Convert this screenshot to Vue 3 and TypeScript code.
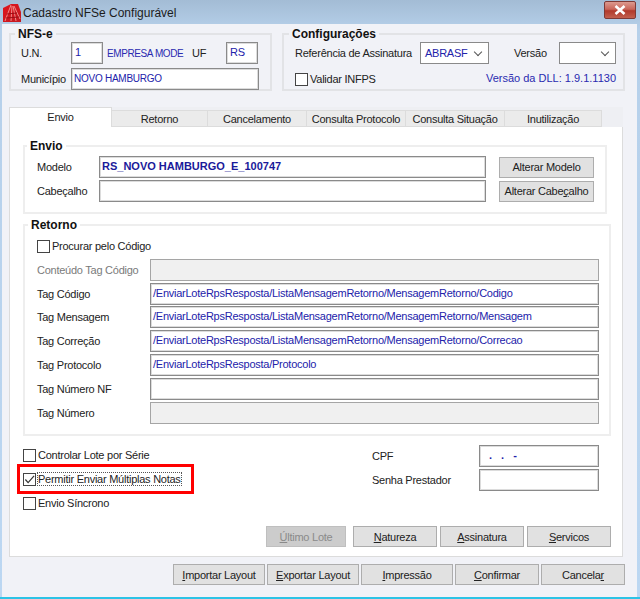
<script setup lang="ts">
const tabs = [
  { label: 'Envio', width: 103 },
  { label: 'Retorno', width: 96 },
  { label: 'Cancelamento', width: 99 },
  { label: 'Consulta Protocolo', width: 99 },
  { label: 'Consulta Situação', width: 99 },
  { label: 'Inutilização', width: 97 },
]

const tagRows = [
  { label: 'Conteúdo Tag Código', value: '', off: true },
  { label: 'Tag Código', value: '/EnviarLoteRpsResposta/ListaMensagemRetorno/MensagemRetorno/Codigo', off: false },
  { label: 'Tag Mensagem', value: '/EnviarLoteRpsResposta/ListaMensagemRetorno/MensagemRetorno/Mensagem', off: false },
  { label: 'Tag Correção', value: '/EnviarLoteRpsResposta/ListaMensagemRetorno/MensagemRetorno/Correcao', off: false },
  { label: 'Tag Protocolo', value: '/EnviarLoteRpsResposta/Protocolo', off: false },
  { label: 'Tag Número NF', value: '', off: false },
  { label: 'Tag Número', value: '', off: true },
]

const actionsTop = [
  { key: 'N', rest: 'atureza' },
  { key: 'A', rest: 'ssinatura' },
  { key: 'S', rest: 'ervicos' },
]

const actionsBottom = [
  { pre: '', key: 'I', rest: 'mportar Layout', width: 92 },
  { pre: '', key: 'E', rest: 'xportar Layout', width: 92 },
  { pre: '', key: 'I', rest: 'mpressão', width: 92 },
  { pre: '', key: 'C', rest: 'onfirmar', width: 84 },
  { pre: 'Cancela', key: 'r', rest: '', width: 84 },
]
</script>

<template>
  <div class="window">
    <header class="titlebar">
      <svg class="appicon" viewBox="0 0 18 18" width="18" height="18">
        <defs>
          <linearGradient id="iconRed" x1="0" y1="0" x2="1" y2="1">
            <stop offset="0" stop-color="#e0141c" />
            <stop offset="1" stop-color="#c41a22" />
          </linearGradient>
        </defs>
        <path d="M0 4 L8 0 L15 0 L18 8 L18 18 L0 18 Z" fill="url(#iconRed)" />
        <path d="M8 1 L2 17 M9 2 L8 17 M10 2 L13 17 M11 2 L17 15" stroke="#f08a88" stroke-width="1" fill="none" />
        <path d="M4 10 L14 9 M3 14 L16 13" stroke="#9c0f16" stroke-width="1" fill="none" />
      </svg>
      <span class="title">Cadastro NFSe Configurável</span>
      <div class="close">
        <svg viewBox="0 0 12 10" width="12" height="10">
          <path d="M1.5 1 L10.5 9 M10.5 1 L1.5 9" stroke="#fff" stroke-width="2.6" />
        </svg>
      </div>
    </header>

    <div class="client">
      <div class="top">
        <fieldset class="group nfse">
          <legend>NFS-e</legend>
          <div class="line">
            <label class="lb-un">U.N.</label>
            <div class="input w-un">1</div>
            <span class="blue company">EMPRESA MODE</span>
            <label class="lb-uf">UF</label>
            <div class="input w-un">RS</div>
          </div>
          <div class="line second">
            <label class="lb-un">Município</label>
            <div class="input w-city">NOVO HAMBURGO</div>
          </div>
        </fieldset>

        <fieldset class="group config">
          <legend>Configurações</legend>
          <div class="line">
            <label class="lb-ref">Referência de Assinatura</label>
            <div class="select w-abrasf"><span>ABRASF</span><i class="chev" /></div>
            <label class="lb-ver">Versão</label>
            <div class="select w-ver"><span></span><i class="chev" /></div>
          </div>
          <div class="line second between">
            <label class="check"><i class="box" />Validar INFPS</label>
            <span class="blue dll">Versão da DLL: 1.9.1.1130</span>
          </div>
        </fieldset>
      </div>

      <nav class="tabs">
        <div
          v-for="(tab, i) in tabs"
          :key="tab.label"
          class="tab"
          :class="{ active: i === 0 }"
          :style="{ width: tab.width + 'px' }"
        >{{ tab.label }}</div>
      </nav>

      <section class="panel">
        <fieldset class="group envio">
          <legend>Envio</legend>
          <div class="line">
            <label class="lb-envio">Modelo</label>
            <div class="input w-model strong">RS_NOVO HAMBURGO_E_100747</div>
            <button class="btn w-alter">Alterar Modelo</button>
          </div>
          <div class="line">
            <label class="lb-envio">Cabeçalho</label>
            <div class="input w-model"></div>
            <button class="btn w-alter">Alterar Cabe<u>ç</u>alho</button>
          </div>
        </fieldset>

        <fieldset class="group retorno">
          <legend>Retorno</legend>
          <label class="check"><i class="box" />Procurar pelo Código</label>
          <div v-for="row in tagRows" :key="row.label" class="tag-row">
            <label class="lb-tag" :class="{ muted: row.label.startsWith('Conte') }">{{ row.label }}</label>
            <div class="input w-tag" :class="{ off: row.off }">{{ row.value }}</div>
          </div>
        </fieldset>

        <div class="options">
          <div class="checks">
            <label class="check"><i class="box" />Controlar Lote por Série</label>
            <label class="check marked"><i class="box"><svg viewBox="0 0 12 12" width="11" height="11"><path d="M1.5 6 L4.5 9.5 L11 2" fill="none" stroke="#333" stroke-width="1.3" /></svg></i><span class="focus">Permitir Enviar Múltiplas Notas</span></label>
            <label class="check"><i class="box" />Envio Síncrono</label>
          </div>
          <div class="creds">
            <div class="cred"><label>CPF</label><div class="input w-cpf mask">. . -</div></div>
            <div class="cred"><label>Senha Prestador</label><div class="input w-cpf"></div></div>
          </div>
        </div>

        <div class="actions">
          <button class="btn first" disabled><u>Ú</u>ltimo Lote</button>
          <button v-for="a in actionsTop" :key="a.rest" class="btn wide"><u>{{ a.key }}</u>{{ a.rest }}</button>
        </div>
      </section>

      <footer class="foot">
        <button
          v-for="a in actionsBottom"
          :key="a.rest + a.pre"
          class="btn"
          :style="{ width: a.width + 'px' }"
        >{{ a.pre }}<u>{{ a.key }}</u>{{ a.rest }}</button>
      </footer>
    </div>
  </div>
</template>

<style>
html, body {
  margin: 0;
  background: #b9d4ee;
}
</style>

<style scoped>
* {
  box-sizing: border-box;
}
.window {
  width: 640px;
  height: 599px;
  display: flex;
  flex-direction: column;
  background: linear-gradient(180deg, #a3bcd5 0, #b6d0ea 30px, #bcd7f2 100%);
  border-bottom: 2px solid #2cc3e6;
  font-family: "Liberation Sans", Arial, sans-serif;
  font-size: 11px;
  letter-spacing: -0.25px;
  color: #222;
}
.titlebar {
  height: 24px;
  flex: none;
  display: flex;
  align-items: center;
  padding-left: 3px;
}
.appicon {
  flex: none;
  margin-top: 2px;
}
.title {
  margin: 1px 0 0 2px;
  font-size: 12px;
  letter-spacing: 0;
  color: #1c1c1c;
}
.close {
  margin: -4px 4px 0 auto;
  width: 32px;
  height: 18px;
  display: flex;
  align-items: center;
  justify-content: center;
  border: 1px solid #7e3a36;
  border-radius: 2px;
  background: linear-gradient(180deg, #dc9a8f 0, #c9665a 45%, #b13a2c 55%, #c2604f 100%);
}
.client {
  flex: 1;
  margin: 0 3px 0 2px;
  padding-left: 7px;
  background: #f1f2f7;
}
.top {
  display: flex;
  gap: 10px;
  padding-top: 3px;
}
.group {
  margin: 0;
  padding: 0;
  border: 2px solid #e2e3e6;
  min-width: 0;
}
.group legend {
  padding: 0 3px;
  font-weight: 700;
  font-size: 12px;
  line-height: 14px;
  letter-spacing: 0;
  color: #111;
}
.nfse {
  width: 263px;
  height: 64px;
  padding: 0 0 0 10px;
}
.nfse legend,
.config legend {
  margin-left: -6px;
}
.config {
  width: 343px;
  height: 64px;
  padding: 0 0 0 11px;
}
.line {
  display: flex;
  align-items: center;
  height: 24px;
}
.second {
  margin-top: 2px;
}
.input {
  height: 22px;
  line-height: 19px;
  padding-left: 2px;
  background: #fff;
  border: 1px solid #8a8a8a;
  box-shadow: inset 0 0 0 1px #dcdcdc;
  color: #2222aa;
  white-space: nowrap;
  overflow: hidden;
  flex: none;
}
.lb-un {
  width: 50px;
}
.w-un {
  width: 32px;
  padding-left: 3px;
}
.company {
  width: 85px;
  margin-left: 4px;
  font-size: 10px;
  letter-spacing: -0.4px;
  white-space: nowrap;
}
.lb-uf {
  width: 34px;
}
.w-city {
  width: 188px;
  font-size: 10px;
}
.blue {
  color: #2a2ab0;
}
.lb-ref {
  width: 125px;
  white-space: nowrap;
}
.select {
  height: 22px;
  flex: none;
  display: flex;
  align-items: center;
  justify-content: space-between;
  padding: 0 7px 0 4px;
  background: #fff;
  border: 1px solid #8a8a8a;
  color: #2222aa;
}
.w-abrasf {
  width: 69px;
}
.w-ver {
  width: 57px;
}
.lb-ver {
  width: 70px;
  padding-left: 25px;
}
.chev {
  display: block;
  width: 6px;
  height: 6px;
  margin-top: -3px;
  border-right: 1px solid #555;
  border-bottom: 1px solid #555;
  transform: rotate(45deg);
}
.between {
  justify-content: space-between;
  padding-right: 7px;
}
.dll {
  margin-top: -3px;
  letter-spacing: 0;
}
.check {
  display: flex;
  flex: none;
  align-items: center;
  height: 24px;
  white-space: nowrap;
}
.box {
  display: flex;
  align-items: center;
  justify-content: center;
  flex: none;
  width: 13px;
  height: 13px;
  margin-right: 2px;
  background: #fff;
  border: 1px solid #444;
}
.tabs {
  display: flex;
  align-items: flex-end;
  width: 614px;
  height: 20px;
  margin-top: 16px;
  background: #eeeff3;
}
.tab {
  height: 17px;
  line-height: 16px;
  text-align: center;
  background: #ebebeb;
  border: 1px solid #dcdcdc;
  border-left: 0;
  white-space: nowrap;
}
.tab.active {
  height: 20px;
  line-height: 18px;
  background: #fff;
  border: 1px solid #dcdcdc;
  border-bottom: 0;
}
.panel {
  width: 614px;
  height: 430px;
  padding: 12px 0 0 13px;
  background: #fff;
  border: 1px solid #dcdcdc;
  border-top: 0;
}
.envio {
  width: 584px;
  height: 75px;
  padding: 2px 0 0 12px;
  border-color: #eee;
}
.envio legend {
  margin-left: -10px;
}
.lb-envio {
  width: 62px;
}
.w-model {
  width: 387px;
}
.strong {
  font-weight: 700;
  letter-spacing: 0;
  color: #1a1a9a;
}
.btn {
  height: 21px;
  padding: 0;
  background: #e1e1e1;
  border: 1px solid #adadad;
  font-family: inherit;
  font-size: 11px;
  letter-spacing: -0.25px;
  color: #222;
  white-space: nowrap;
}
.w-alter {
  width: 95px;
  margin-left: 13px;
}
.retorno {
  width: 588px;
  height: 218px;
  margin-top: 4px;
  padding: 2px 0 0 12px;
  border-color: #eee;
}
.retorno legend {
  margin-left: -9px;
}
.tag-row {
  display: flex;
  align-items: center;
  height: 23.8px;
}
.lb-tag {
  width: 113px;
  white-space: nowrap;
}
.muted {
  color: #7a7a7a;
}
.w-tag {
  width: 449px;
}
.off {
  background: #f0f0f0;
  border-color: #a5a5a5;
  box-shadow: none;
}
.options {
  display: flex;
  justify-content: space-between;
  height: 76px;
  margin-top: 4px;
}
.checks {
  display: flex;
  flex-direction: column;
  width: 340px;
  padding-top: 3px;
}
.marked {
  width: 171px;
  margin-left: -3px;
  padding-left: 3px;
  outline: 3px solid #f00;
}
.focus {
  outline: 1px dotted #555;
}
.creds {
  width: 228px;
  margin-right: 22px;
  padding-top: 4px;
}
.cred {
  display: flex;
  align-items: center;
  height: 24px;
}
.cred label {
  width: 107px;
}
.w-cpf {
  width: 120px;
}
.mask {
  padding-left: 9px;
  font-weight: 700;
  letter-spacing: 0;
  word-spacing: 6px;
}
.actions {
  display: flex;
  justify-content: flex-end;
  gap: 3px;
  margin-top: 10px;
  padding-right: 11px;
}
.first {
  width: 80px;
  margin-right: 4px;
  background: #ccc;
  color: #8a8a8a;
  border-color: #bfbfbf;
}
.wide {
  width: 84px;
}
.foot {
  display: flex;
  justify-content: flex-end;
  gap: 2px;
  margin-top: 7px;
  padding-right: 12px;
}
</style>
